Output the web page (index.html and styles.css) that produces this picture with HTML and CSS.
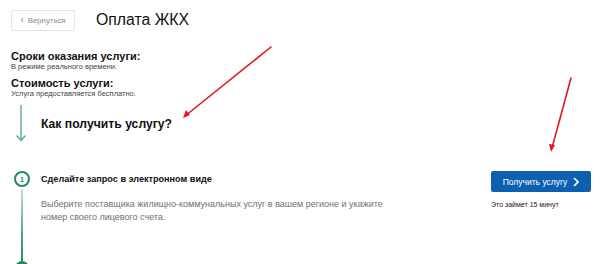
FILE: index.html
```html
<!DOCTYPE html>
<html lang="ru">
<head>
<meta charset="utf-8">
<title>Оплата ЖКХ</title>
<link rel="stylesheet" href="styles.css">
</head>
<body>
<div class="page">
  <header class="head">
    <button class="back"><span class="back-chev">&lsaquo;</span> Вернуться</button>
    <h1 class="title">Оплата ЖКХ</h1>
  </header>

  <section class="info">
    <div class="info-item">
      <div class="info-label">Сроки оказания услуги:</div>
      <div class="info-value">В режиме реального времени.</div>
    </div>
    <div class="info-item">
      <div class="info-label">Стоимость услуги:</div>
      <div class="info-value">Услуга предоставляется бесплатно.</div>
    </div>
  </section>

  <section class="how">
    <div class="how-arrow">
      <svg width="12" height="37" viewBox="0 0 12 37"><path d="M6 0V35M1.5 30.5L6 35.5L10.5 30.5" fill="none" stroke="#5aac8f" stroke-width="1.4"/></svg>
    </div>
    <h2 class="how-title">Как получить услугу?</h2>
  </section>

  <section class="step">
    <div class="timeline">
      <div class="dot">1</div>
      <div class="line"></div>
      <div class="dot2"></div>
    </div>
    <div class="step-body">
      <div class="step-title">Сделайте запрос в электронном виде</div>
      <p class="step-text">Выберите поставщика жилищно-коммунальных услуг в вашем регионе и укажите номер своего лицевого счета.</p>
    </div>
    <div class="step-aside">
      <button class="get">Получить услугу <svg class="get-chev" width="6" height="10" viewBox="0 0 6 10"><path d="M1 1L5 5L1 9" fill="none" stroke="#fff" stroke-width="1.6"/></svg></button>
      <div class="get-note">Это займет 15 минут</div>
    </div>
  </section>
</div>

<svg class="marks" width="600" height="264" viewBox="0 0 600 264">
  <g stroke="#e3191b" stroke-width="1.6" fill="none" stroke-linecap="round">
    <path d="M271 47L185 116"/>
    <path d="M571 78L552 148"/>
  </g>
  <g fill="#e3191b">
    <path d="M183 118L186 110L190 115Z"/>
    <path d="M551 152L549 144L555 145Z"/>
  </g>
</svg>
</body>
</html>
```
FILE: styles.css
```css
* { box-sizing: border-box; }
html, body { margin: 0; padding: 0; background: #fff; }
body {
  font-family: "Liberation Sans", Arial, sans-serif;
  color: #111;
  width: 600px;
  height: 264px;
  overflow: hidden;
  position: relative;
}
.page { padding: 10px 9px 0 11px; }

.head { display: flex; align-items: flex-start; }
.back {
  width: 64px;
  height: 21px;
  border: 1px solid #e3e3e3;
  border-radius: 2px;
  background: #fff;
  color: #8a8a8a;
  font-family: inherit;
  font-size: 7.8px;
  padding: 0;
  display: flex;
  align-items: center;
  justify-content: center;
  gap: 4px;
}
.back-chev { font-size: 10px; line-height: 1; margin-top: -1px; }
.title {
  margin: 0 0 0 21px;
  font-size: 15.8px;
  font-weight: normal;
  line-height: 18px;
  padding-top: 1px;
  color: #111;
}

.info { margin-top: 19px; display: flex; flex-direction: column; gap: 5px; }
.info-label { font-size: 11px; font-weight: bold; line-height: 12px; }
.info-value { font-size: 7.5px; line-height: 10px; color: #444; }

.how { display: flex; align-items: flex-start; margin-top: 6px; }
.how-arrow { width: 30px; padding-left: 4px; }
.how-arrow svg { display: block; }
.how-title { margin: 11px 0 0 0; font-size: 12.2px; font-weight: bold; line-height: 16px; }

.step { display: flex; align-items: flex-start; margin-top: 29px; }
.timeline { width: 30px; display: flex; flex-direction: column; align-items: center; padding-right: 10px; padding-left: 2px; }
.dot {
  width: 16px; height: 16px;
  border: 2px solid #1f8b5e;
  border-radius: 50%;
  font-size: 7px;
  font-weight: bold;
  color: #1f8b5e;
  display: flex; align-items: center; justify-content: center;
}
.line { width: 2px; height: 72px; background: linear-gradient(#c9ddd4, #5aa886 60%, #1f8b5e); margin-top: 2px; }
.dot2 { width: 14px; height: 14px; border-radius: 50%; background: #1f8b5e; }

.step-body { width: 450px; padding-top: 3px; }
.step-title { font-size: 9.1px; font-weight: bold; line-height: 11px; color: #111; }
.step-text { margin: 13px 0 0 0; font-size: 9px; line-height: 13px; color: #707070; width: 360px; }

.step-aside { width: 100px; }
.get {
  width: 100px; height: 21px;
  background: #0d5fb0;
  border: 0; border-radius: 2px;
  color: #fff;
  font-family: inherit;
  font-size: 8.5px;
  display: flex; align-items: center; justify-content: center; gap: 6px;
  padding: 0;
}
.get-chev { display: block; }
.get-note { margin-top: 9px; font-size: 7px; color: #222; }

.marks { position: absolute; left: 0; top: 0; pointer-events: none; }
```
